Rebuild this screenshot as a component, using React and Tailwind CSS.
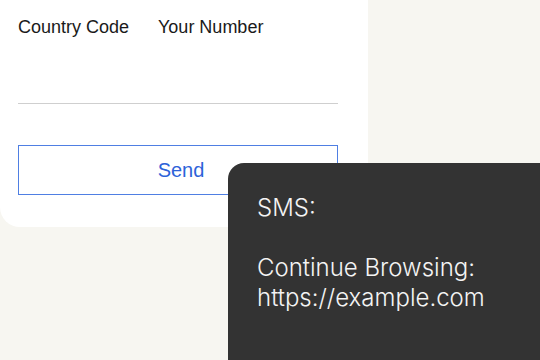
import React from 'react';

function App() {
  return (
    <div className="relative w-[540px] h-[360px] overflow-hidden bg-[#f7f6f1]">
      <div className="w-[368px] -mt-[20px] pt-[37px] pb-[32px] pl-[18px] pr-[30px] bg-white rounded-[20px]">
        <div className="flex text-[18px] text-[#1a1a1a] font-['Liberation_Sans',Arial,sans-serif] leading-[20px]">
          <span className="w-[140px]">Country Code</span>
          <span>Your Number</span>
        </div>
        <div className="mt-[66px] h-px bg-[#cfcfcf]" />
        <button className="mt-[41px] w-full h-[50px] pl-[6px] border border-[#4f7fe3] bg-white text-[#2d63d9] text-[20px] font-['Liberation_Sans',Arial,sans-serif]">
          Send
        </button>
      </div>
      <div className="absolute left-[228px] top-[163px] w-[340px] h-[240px] rounded-tl-[16px] bg-[#333333] pl-[29px] pt-[30px] text-[24px] leading-[30px] font-light text-[#f4f4f4] font-['Inter',sans-serif]">
        <div>SMS:</div>
        <div className="h-[30px]" />
        <div>Continue Browsing:</div>
        <div>https://example.com</div>
      </div>
    </div>
  );
}

export default App;
